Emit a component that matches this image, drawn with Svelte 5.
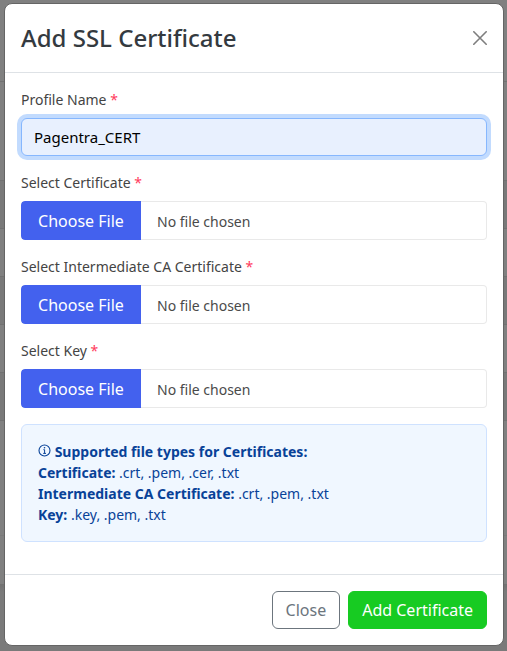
<script>
    let profileName = $state('Pagentra_CERT');

    const fileFields = [
        { id: 'certificate', label: 'Select Certificate', accept: '.crt,.pem,.cer,.txt' },
        { id: 'intermediate', label: 'Select Intermediate CA Certificate', accept: '.crt,.pem,.txt' },
        { id: 'key', label: 'Select Key', accept: '.key,.pem,.txt' }
    ];

    const fileTypes = [
        { name: 'Certificate', types: '.crt, .pem, .cer, .txt' },
        { name: 'Intermediate CA Certificate', types: '.crt, .pem, .txt' },
        { name: 'Key', types: '.key, .pem, .txt' }
    ];
</script>

<div class="backdrop">
    <form class="modal" role="dialog" aria-labelledby="title">
        <header>
            <h1 id="title">Add SSL Certificate</h1>
            <button type="button" class="close" aria-label="Dismiss">
                <svg width="14" height="14" viewBox="0 0 14 14" fill="none" stroke="#000" stroke-width="1.6" stroke-linecap="round">
                    <path d="M.8 .8l12.4 12.4M13.2 .8l-12.4 12.4" />
                </svg>
            </button>
        </header>

        <div class="body">
            <div class="field">
                <label for="profile">Profile Name <span class="required">*</span></label>
                <input id="profile" class="text" type="text" bind:value={profileName} />
            </div>

            {#each fileFields as field}
                <div class="field">
                    <label for={field.id}>{field.label} <span class="required">*</span></label>
                    <input id={field.id} class="file" type="file" accept={field.accept} />
                </div>
            {/each}

            <div class="info">
                <div>
                    <svg width="13" height="13" viewBox="0 0 13 13" fill="none" stroke="currentColor" aria-hidden="true">
                        <circle cx="6.5" cy="6.5" r="5.5" stroke-width="1.1" />
                        <path d="M5.4 5.7h1.2v3.6M5.2 9.4h2.8" stroke-width="1" />
                        <circle cx="6.5" cy="3.8" r=".8" fill="currentColor" stroke="none" />
                    </svg>
                    <strong>Supported file types for Certificates:</strong>
                </div>
                {#each fileTypes as item}
                    <div><strong>{item.name}:</strong> {item.types}</div>
                {/each}
            </div>
        </div>

        <footer>
            <button type="button" class="btn outline">Close</button>
            <button type="button" class="btn success">Add Certificate</button>
        </footer>
    </form>
</div>

<style>
    :global(body) {
        margin: 0;
        background: #7a7a7a;
    }

    .backdrop {
        box-sizing: border-box;
        min-height: 100vh;
        padding: 3px 3px 5px 4px;
        font-family: "Noto Sans", sans-serif;
        font-size: 14px;
        line-height: 21px;
        /* striped table rows under the dimmed page */
        background:
            linear-gradient(#808080 81px, #717171 81px, #717171 82px, #808080 82px, #808080 180px, transparent 180px, transparent 468px, #808080 468px, #808080 535px, #747474 535px, #808080 536px, #808080 584px, #717171 584px, #7a7a7a 592px),
            repeating-linear-gradient(#797979 0 36px, #717171 36px 37px, #808080 37px 84px, #717171 84px 85px, #797979 85px 96px);
    }

    .modal {
        border: 1px solid #656565;
        border-radius: 8px;
        background: #fff;
        color: #444;
    }

    header {
        display: flex;
        align-items: center;
        justify-content: space-between;
        padding: 16px;
        border-bottom: 1px solid #dee2e6;
    }

    h1 {
        margin: 0;
        color: #343a40;
        font-size: 24px;
        font-weight: 500;
        line-height: 36px;
    }

    .close {
        display: flex;
        padding: 0;
        border: 0;
        background: none;
        opacity: 0.5;
    }

    .body {
        display: flex;
        flex-direction: column;
        gap: 16px;
        padding: 16px 16px 32px;
    }

    .field {
        display: flex;
        flex-direction: column;
        gap: 8px;
    }

    .required {
        color: #ff3b5c;
    }

    input {
        box-sizing: border-box;
        width: 100%;
        margin: 0;
        border-radius: 6px;
        font-family: inherit;
    }

    .text {
        height: 38px;
        padding: 6px 12px;
        border: 1px solid #86b7fe;
        outline: none;
        box-shadow: 0 0 0 4px #c2dbfe;
        background: #e8f0fe;
        color: #000;
        font-size: 15px;
    }

    .file {
        height: 39px;
        border-radius: 4px;
        box-shadow: inset 0 0 0 1px #e9e9e9;
        color: #4a4a4a;
        font-size: 14px;
        line-height: 39px;
    }

    .file::file-selector-button {
        box-sizing: border-box;
        width: 120px;
        height: 39px;
        margin: 0 16px 0 0;
        padding: 0;
        border: 0;
        border-radius: 4px 0 0 4px;
        background: #4361ee;
        color: #fff;
        font-family: inherit;
        font-size: 16px;
    }

    .info {
        padding: 16px;
        border: 1px solid #cfe2ff;
        border-radius: 6px;
        background: #f0f7ff;
        color: #084298;
    }

    .info strong {
        font-weight: 700;
    }

    footer {
        display: flex;
        justify-content: flex-end;
        gap: 8px;
        padding: 16px;
        border-top: 1px solid #dee2e6;
    }

    .btn {
        height: 38px;
        padding: 0 13px;
        border: 1px solid;
        border-radius: 6px;
        font-family: inherit;
        font-size: 16px;
    }

    .outline {
        border-color: #6c757d;
        background: #fff;
        color: #6c757d;
    }

    .success {
        border-color: #17cb22;
        background: #17cb22;
        color: #fff;
    }
</style>
